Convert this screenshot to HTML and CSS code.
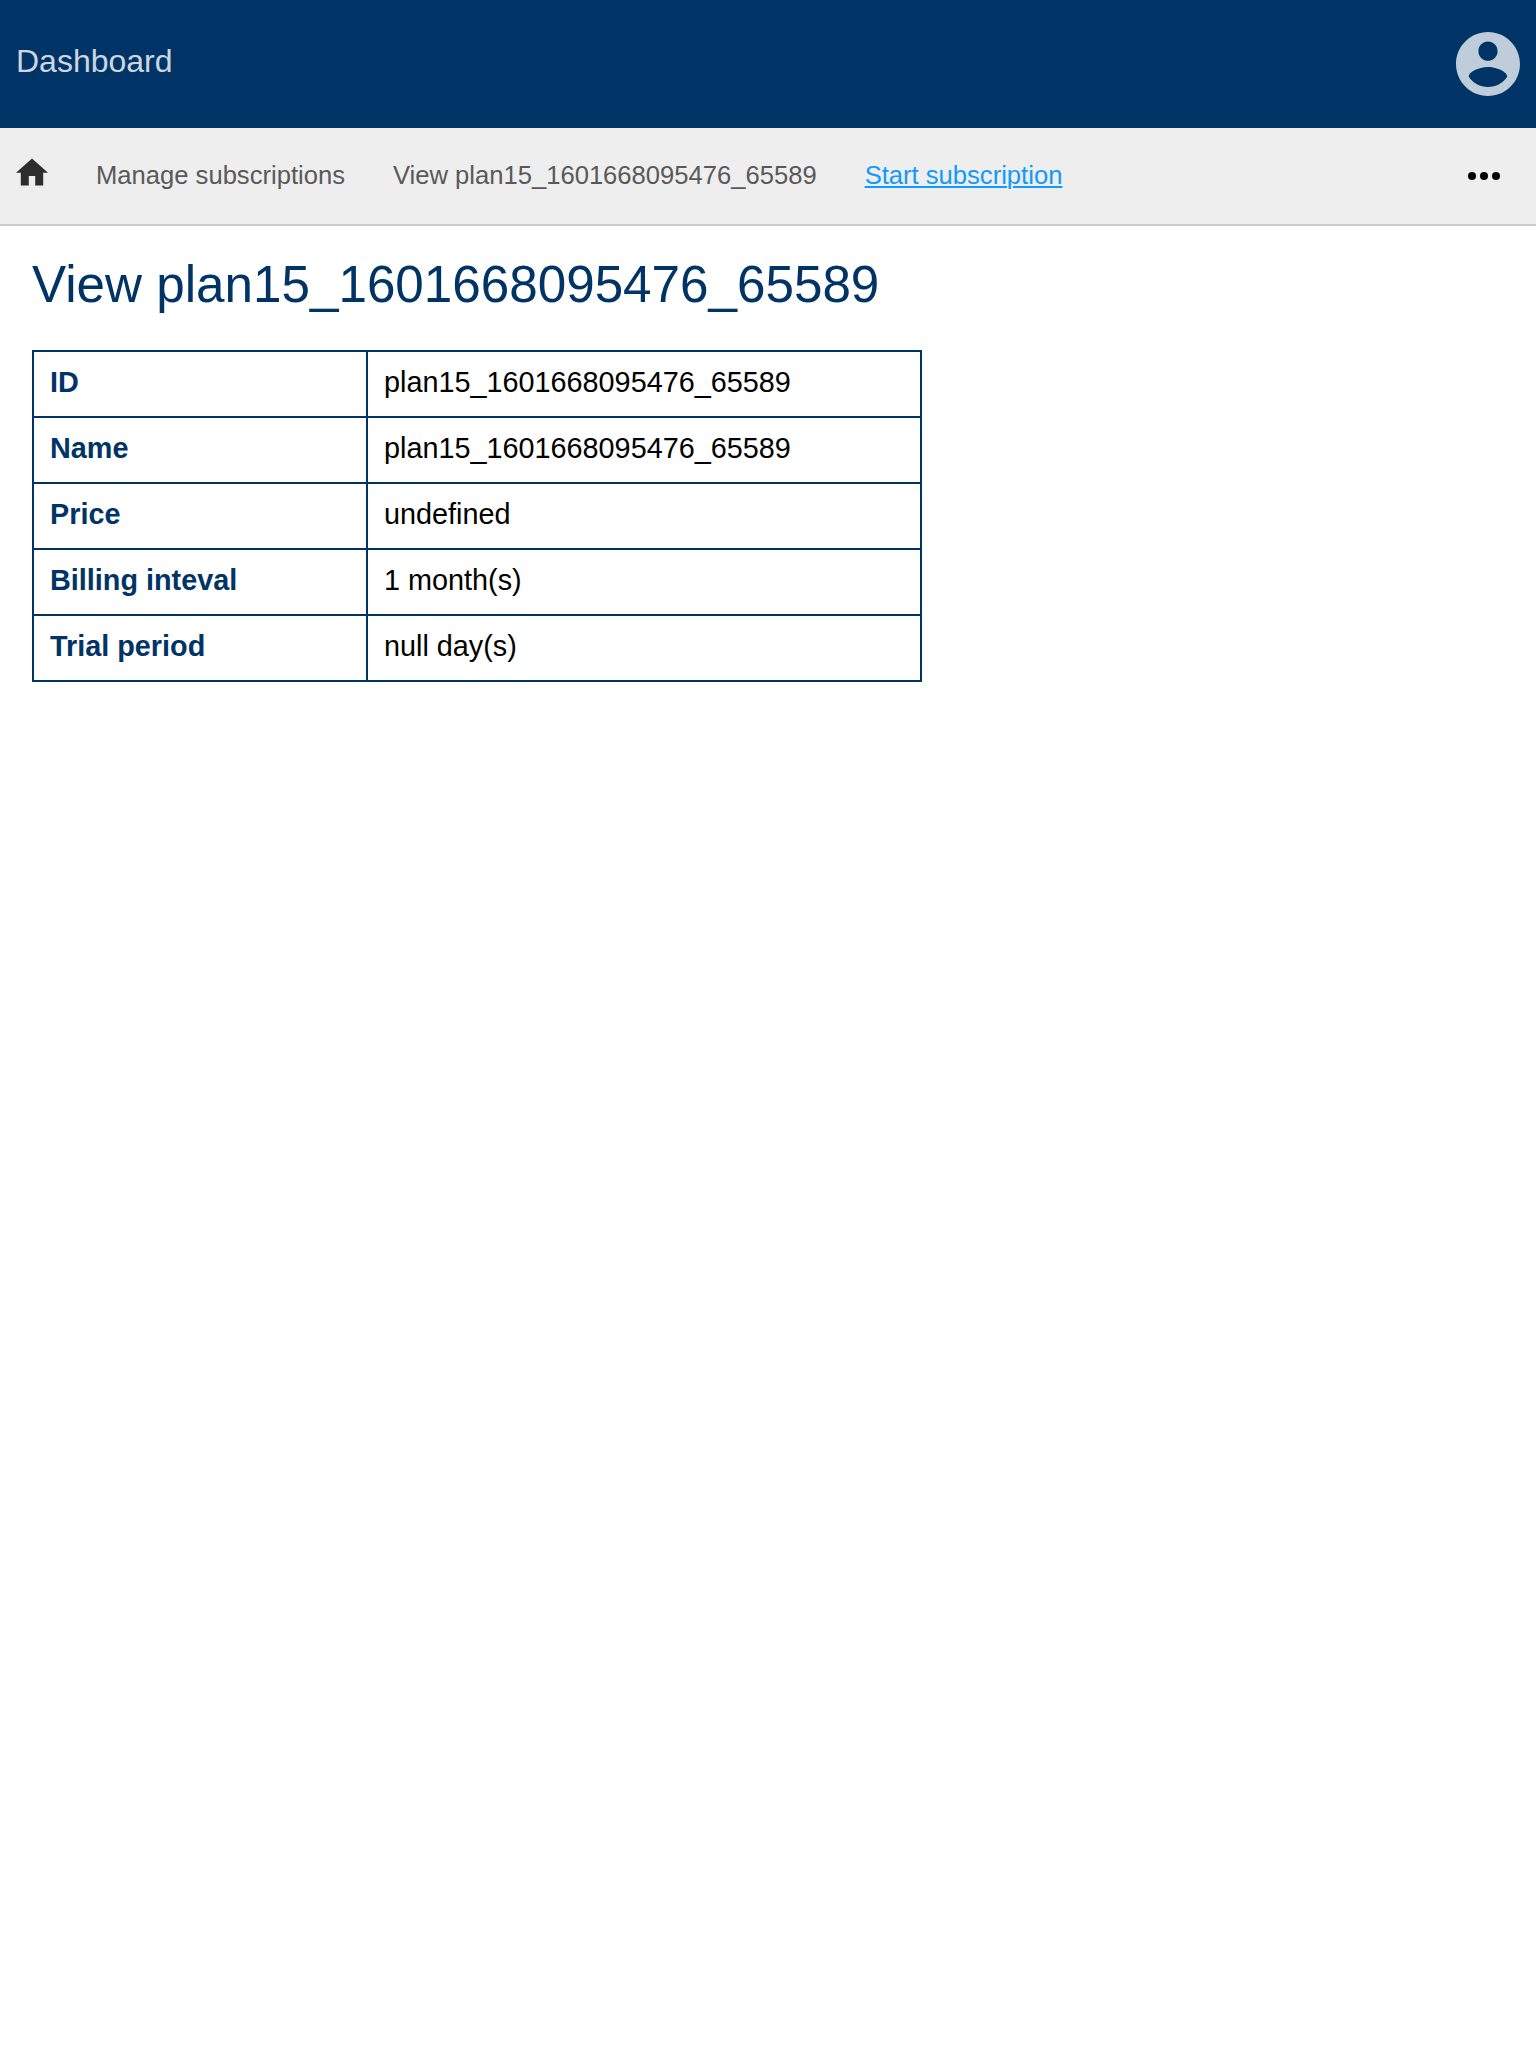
FILE: index.html
```html
<!DOCTYPE html>
<html lang="en">
<head>
<meta charset="utf-8">
<title>Dashboard</title>
<link rel="stylesheet" href="styles.css">
</head>
<body>
<header class="header">
  <a class="brand">Dashboard</a>
  <svg class="account" viewBox="2 2 20 20"><path d="M12 2C6.48 2 2 6.48 2 12s4.48 10 10 10 10-4.48 10-10S17.52 2 12 2zm0 3c1.66 0 3 1.34 3 3s-1.34 3-3 3-3-1.34-3-3 1.34-3 3-3zm0 14.2c-2.5 0-4.71-1.28-6-3.22.03-1.99 4-3.08 6-3.08 1.99 0 5.97 1.09 6 3.08-1.29 1.94-3.5 3.22-6 3.22z"/></svg>
</header>
<nav class="nav">
  <svg class="home" viewBox="2 2.75 20 17.5"><path d="M10 20v-6h4v6h5v-8h3L12 3 2 12h3v8z"/></svg>
  <a class="crumb">Manage subscriptions</a>
  <a class="crumb">View plan15_1601668095476_65589</a>
  <a class="crumb crumb-active">Start subscription</a>
  <svg class="more" viewBox="0 0 32 8"><circle cx="4" cy="4" r="4"/><circle cx="16" cy="4" r="4"/><circle cx="28" cy="4" r="4"/></svg>
</nav>
<main class="content">
  <h1 class="title">View plan15_1601668095476_65589</h1>
  <table class="details">
    <tr><th>ID</th><td>plan15_1601668095476_65589</td></tr>
    <tr><th>Name</th><td>plan15_1601668095476_65589</td></tr>
    <tr><th>Price</th><td>undefined</td></tr>
    <tr><th>Billing inteval</th><td>1 month(s)</td></tr>
    <tr><th>Trial period</th><td>null day(s)</td></tr>
  </table>
</main>
</body>
</html>
```
FILE: styles.css
```css
* { box-sizing: border-box; }
body {
  margin: 0;
  background: #fff;
  color: #000;
  font-family: "Liberation Sans", Arial, sans-serif;
  font-size: 32px;
}
.header {
  display: flex;
  align-items: center;
  justify-content: space-between;
  height: 128px;
  padding: 0 16px;
  background: #036;
}
.brand {
  padding-bottom: 6px;
  line-height: 36px;
  color: #ccd6e0;
}
.account { width: 64px; height: 64px; fill: #bfccd9; }
.nav {
  display: flex;
  align-items: center;
  gap: 48px;
  height: 98px;
  padding: 0 36px 0 16px;
  background: #eee;
  border-bottom: 2px solid #ccc;
}
.home { width: 32px; height: 28px; margin-bottom: 8px; fill: #2d2d2d; }
.crumb {
  padding-bottom: 2px;
  font-size: 25.6px;
  line-height: 30px;
  color: #595959;
  white-space: nowrap;
}
.crumb-active {
  color: #19f;
  text-decoration: underline;
  text-decoration-thickness: 2px;
  text-underline-offset: 2px;
}
.more { width: 32px; height: 8px; margin-left: auto; }
.content { padding: 29px 32px; }
.title {
  margin: 0 0 35px;
  font-size: 51.2px;
  font-weight: 400;
  line-height: 60px;
  color: #036;
}
.details {
  width: 890px;
  table-layout: fixed;
  border-collapse: collapse;
  font-size: 28.8px;
  line-height: 32px;
}
.details th, .details td {
  padding: 14px 16px 18px;
  border: 2px solid #036;
  text-align: left;
}
.details th { width: 334px; color: #036; }
```
